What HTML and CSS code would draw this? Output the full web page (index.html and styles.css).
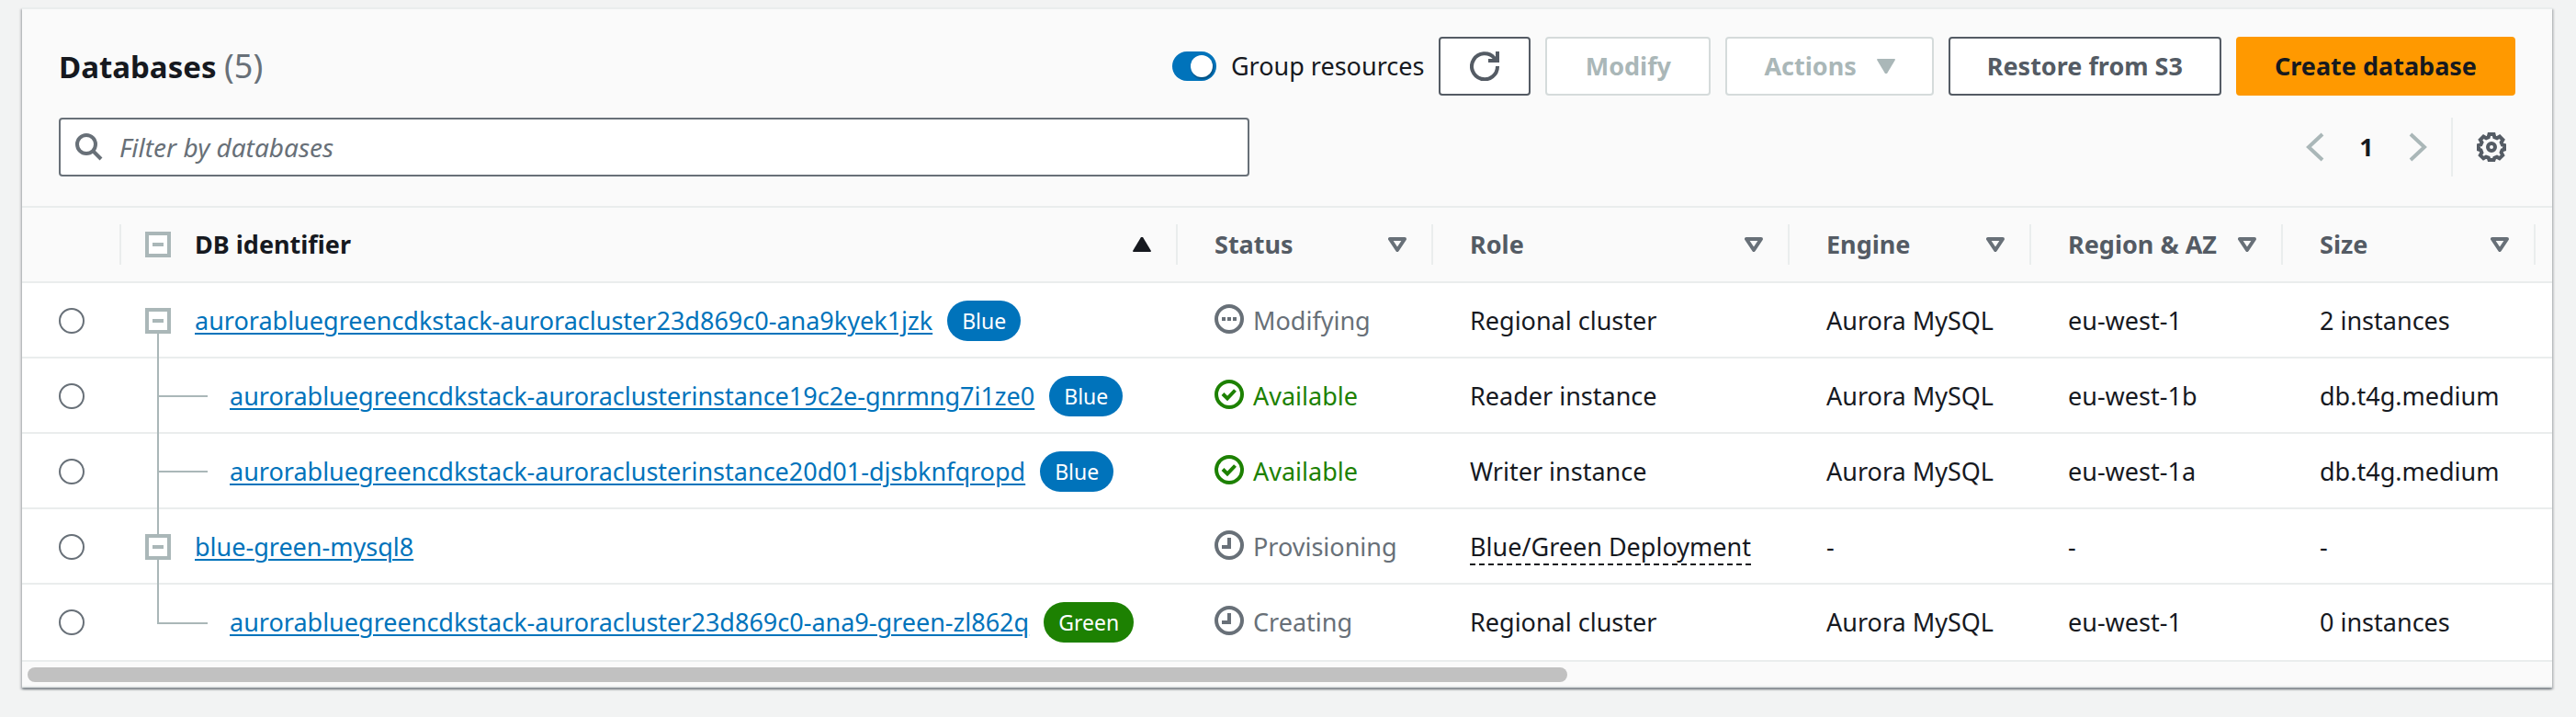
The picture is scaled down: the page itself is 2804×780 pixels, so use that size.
FILE: index.html
```
<!DOCTYPE html>
<html lang="en">
<head>
<meta charset="utf-8">
<title>Databases</title>
<link rel="stylesheet" href="styles.css">
</head>
<body>
<svg class="sprite" aria-hidden="true">
  <symbol id="i-ok" viewBox="0 0 32 32"><circle cx="16" cy="16" r="14"/><path d="M9 15.500l5 5 8.500-9"/></symbol>
  <symbol id="i-dots" viewBox="0 0 32 32"><circle cx="16" cy="16" r="14"/><path d="M8 16h4M14 16h4M20 16h4"/></symbol>
  <symbol id="i-clock" viewBox="0 0 32 32"><circle cx="16" cy="16" r="14"/><path d="M16 8v10H8"/></symbol>
  <symbol id="i-sort" viewBox="0 0 20 16"><path d="M2 2h16l-8 12z"/></symbol>
</svg>
<main class="panel">
  <header class="head">
    <div class="head-row">
      <h1 class="title">Databases <span class="count">(5)</span></h1>
      <div class="actions">
        <label class="group"><input class="toggle" type="checkbox" role="switch" checked>Group resources</label>
        <button class="btn btn-icon" type="button" aria-label="Refresh"><svg class="icon" viewBox="0 0 32 32"><path d="M30 16A14 14 0 1 1 26.500 7L29 10M30 0v10H20"/></svg></button>
        <button class="btn" type="button" disabled>Modify</button>
        <button class="btn" type="button" disabled>Actions <svg class="caret" viewBox="0 0 20 16"><path d="M1 0h18q1 0 1 1L11 16H9L0 1q0-1 1-1z"/></svg></button>
        <button class="btn" type="button">Restore from S3</button>
        <button class="btn btn-primary" type="button">Create database</button>
      </div>
    </div>
    <div class="head-row">
      <div class="search">
        <svg class="search-icon" viewBox="0 0 30 30"><circle cx="12" cy="12" r="10"/><path d="M19 19l9 9"/></svg>
        <input class="search-input" type="search" placeholder="Filter by databases" aria-label="Filter by databases">
      </div>
      <div class="tools">
        <nav class="pager" aria-label="Pages">
          <button class="plain chev" type="button" disabled aria-label="Previous page"><svg viewBox="0 0 20 32"><path d="M18 2L3 16l15 14"/></svg></button>
          <button class="plain page" type="button">1</button>
          <button class="plain chev" type="button" disabled aria-label="Next page"><svg viewBox="0 0 20 32"><path d="M2 2l15 14L2 30"/></svg></button>
        </nav>
        <button class="plain gear" type="button" aria-label="Preferences"><svg class="icon" viewBox="0 0 32 32"><path d="M13.500 2h5l.8 3.200 2.700 1.100 2.900-1.700 3.500 3.500-1.700 2.900 1.100 2.500 2.200.5v4.500l-2.400.8-1 2.600 1.600 2.900-3.500 3.500-2.800-1.600-2.600 1.100-.8 2.200h-5l-.8-2.400-2.600-1-2.800 1.700-3.500-3.500 1.600-2.800-1-2.600L2 18.500V14l2.400-.6 1.100-2.500L3.800 8l3.500-3.500 2.900 1.700 2.500-1z"/><circle cx="16" cy="16" r="4"/></svg></button>
      </div>
    </div>
  </header>
  <table class="grid">
    <colgroup><col class="c-pick"><col><col class="c-status"><col class="c-role"><col class="c-engine"><col class="c-region"><col class="c-size"><col class="c-end"></colgroup>
    <thead>
      <tr>
        <th><div class="th"></div></th>
        <th><div class="th th-id sorted"><button class="box" type="button" aria-label="Collapse all"></button><span>DB identifier</span><svg class="caret" viewBox="0 0 20 16"><path d="M9 0h2l9 15q0 1-1 1H1q-1 0-1-1z"/></svg></div></th>
        <th><div class="th">Status<svg class="sort"><use href="#i-sort"/></svg></div></th>
        <th><div class="th">Role<svg class="sort"><use href="#i-sort"/></svg></div></th>
        <th><div class="th">Engine<svg class="sort"><use href="#i-sort"/></svg></div></th>
        <th><div class="th">Region &amp; AZ<svg class="sort"><use href="#i-sort"/></svg></div></th>
        <th><div class="th">Size<svg class="sort"><use href="#i-sort"/></svg></div></th>
        <th></th>
      </tr>
    </thead>
    <tbody>
      <tr>
        <td class="pick"><input class="radio" type="radio" name="db" aria-label="aurorabluegreencdkstack-auroracluster23d869c0-ana9kyek1jzk"></td>
        <td class="id root first"><div class="name"><button class="box" type="button" aria-label="Collapse"></button><a class="link" href="#">aurorabluegreencdkstack-auroracluster23d869c0-ana9kyek1jzk</a><span class="badge">Blue</span></div></td>
        <td><div class="status"><svg class="icon"><use href="#i-dots"/></svg>Modifying</div></td>
        <td>Regional cluster</td><td>Aurora MySQL</td><td>eu-west-1</td><td>2 instances</td><td></td>
      </tr>
      <tr>
        <td class="pick"><input class="radio" type="radio" name="db" aria-label="aurorabluegreencdkstack-auroraclusterinstance19c2e-gnrmng7i1ze0"></td>
        <td class="id child"><div class="name"><a class="link" href="#">aurorabluegreencdkstack-auroraclusterinstance19c2e-gnrmng7i1ze0</a><span class="badge">Blue</span></div></td>
        <td><div class="status ok"><svg class="icon"><use href="#i-ok"/></svg>Available</div></td>
        <td>Reader instance</td><td>Aurora MySQL</td><td>eu-west-1b</td><td>db.t4g.medium</td><td></td>
      </tr>
      <tr>
        <td class="pick"><input class="radio" type="radio" name="db" aria-label="aurorabluegreencdkstack-auroraclusterinstance20d01-djsbknfqropd"></td>
        <td class="id child"><div class="name"><a class="link" href="#">aurorabluegreencdkstack-auroraclusterinstance20d01-djsbknfqropd</a><span class="badge">Blue</span></div></td>
        <td><div class="status ok"><svg class="icon"><use href="#i-ok"/></svg>Available</div></td>
        <td>Writer instance</td><td>Aurora MySQL</td><td>eu-west-1a</td><td>db.t4g.medium</td><td></td>
      </tr>
      <tr>
        <td class="pick"><input class="radio" type="radio" name="db" aria-label="blue-green-mysql8"></td>
        <td class="id root"><div class="name"><button class="box" type="button" aria-label="Collapse"></button><a class="link" href="#">blue-green-mysql8</a></div></td>
        <td><div class="status"><svg class="icon"><use href="#i-clock"/></svg>Provisioning</div></td>
        <td><span class="hint">Blue/Green Deployment</span></td><td>-</td><td>-</td><td>-</td><td></td>
      </tr>
      <tr>
        <td class="pick"><input class="radio" type="radio" name="db" aria-label="aurorabluegreencdkstack-auroracluster23d869c0-ana9-green-zl862q"></td>
        <td class="id child last"><div class="name"><a class="link" href="#">aurorabluegreencdkstack-auroracluster23d869c0-ana9-green-zl862q</a><span class="badge green">Green</span></div></td>
        <td><div class="status"><svg class="icon"><use href="#i-clock"/></svg>Creating</div></td>
        <td>Regional cluster</td><td>Aurora MySQL</td><td>eu-west-1</td><td>0 instances</td><td></td>
      </tr>
    </tbody>
  </table>
  <div class="scroll"><div class="thumb"></div></div>
</main>
</body>
</html>
```
FILE: styles.css
```
* { box-sizing: border-box; }
body {
  margin: 0;
  padding: 8px 26px 32px 24px;
  background: #f2f3f3;
  color: #16191f;
  font-family: "Noto Sans", "Open Sans", sans-serif;
  font-size: 27px;
  line-height: 44px;
}
button, input { font: inherit; color: inherit; margin: 0; }
svg { display: block; fill: none; stroke: currentColor; flex: none; }
.sprite { display: none; }
.panel {
  background: #fff;
  border-top: 2px solid #eaeded;
  box-shadow: 0 2px 2px 0 #687078aa, 2px 2px 2px 0 #00071626, -2px 2px 2px 0 #00071626;
}
.head {
  display: flex;
  flex-direction: column;
  gap: 24px;
  padding: 30px 40px 32px;
  background: #fafafa;
  border-bottom: 2px solid #eaeded;
}
.head-row { display: flex; align-items: center; justify-content: space-between; }
.title { margin: 0; font-size: 33px; font-weight: 700; }
.count { font-size: 36px; font-weight: 400; color: #687078; }
.actions { display: flex; align-items: center; gap: 16px; }
.group { display: flex; align-items: center; gap: 16px; }
.toggle {
  appearance: none;
  display: flex;
  justify-content: flex-end;
  width: 48px;
  height: 32px;
  padding: 4px;
  border-radius: 16px;
  background: #0073bb;
}
.toggle::before {
  content: "";
  width: 24px;
  height: 24px;
  border-radius: 50%;
  background: #fff;
  box-shadow: 1px 2px 2px #00000055;
}
.toggle:not(:checked) { justify-content: flex-start; background: #687078; }
.btn {
  display: flex;
  align-items: center;
  justify-content: center;
  gap: 22px;
  min-width: 180px;
  height: 64px;
  padding: 0 40px;
  border: 2px solid #545b64;
  border-radius: 4px;
  background: #fff;
  color: #545b64;
  font-weight: 700;
  white-space: nowrap;
}
.btn:disabled { border-color: #d5dbdb; color: #aab7b8; }
.btn-icon { min-width: 0; padding: 0 32px; }
.btn-primary { background: #f90; border-color: #f90; color: #16191f; }
.icon { width: 32px; height: 32px; stroke-width: 4; }
.caret { width: 20px; height: 16px; fill: currentColor; stroke: none; }
.search {
  display: flex;
  align-items: center;
  gap: 18px;
  width: 1296px;
  height: 64px;
  padding: 0 16px;
  border: 2px solid #687078;
  border-radius: 4px;
  background: #fff;
  color: #687078;
}
.search-icon { width: 30px; height: 30px; stroke-width: 4; }
.search-input { flex: 1; min-width: 0; border: 0; padding: 0; background: none; outline: 0; font-size: 28px; }
.search-input::placeholder { color: #687078; font-style: italic; opacity: 1; }
.tools { display: flex; align-items: center; }
.pager { display: flex; align-items: center; padding-right: 26px; }
.plain { border: 0; padding: 0; background: none; }
.chev { color: #aab7b8; }
.chev svg { width: 20px; height: 32px; stroke-width: 4; }
.page { width: 92px; font-weight: 700; }
.gear { padding: 16px 10px 16px 26px; border-left: 2px solid #eaeded; color: #545b64; }
.grid { width: 100%; border-collapse: separate; border-spacing: 0; table-layout: fixed; }
.c-pick { width: 108px; }
.c-status { width: 278px; }
.c-role { width: 388px; }
.c-engine { width: 263px; }
.c-region { width: 274px; }
.c-size { width: 275px; }
.c-end { width: 18px; }
th {
  height: 82px;
  padding: 0;
  background: #fafafa;
  border-bottom: 2px solid #eaeded;
  color: #545b64;
  font-weight: 700;
  text-align: left;
  white-space: nowrap;
}
.th {
  display: flex;
  align-items: center;
  justify-content: space-between;
  height: 44px;
  padding: 0 27px 0 40px;
  border-right: 2px solid #eaeded;
}
.th-id { justify-content: flex-start; gap: 26px; padding-left: 26px; color: #16191f; }
.th-id .caret { margin-left: auto; }
.sort { width: 20px; height: 16px; stroke: #687078; stroke-width: 4; stroke-linejoin: round; }
td {
  height: 82px;
  padding: 2px 0 0 40px;
  border-bottom: 2px solid #eaeded;
  white-space: nowrap;
}
tbody tr:last-child td { height: 84px; padding-bottom: 2px; }
.radio {
  appearance: none;
  display: block;
  width: 28px;
  height: 28px;
  border: 2px solid #687078;
  border-radius: 50%;
  background: #fff;
}
.radio:checked { border: 8px solid #0073bb; }
.box {
  flex: none;
  display: grid;
  place-items: center;
  width: 28px;
  height: 28px;
  padding: 0;
  border: 4px solid #aab7b8;
  background: #fff;
}
.box::before { content: ""; width: 12px; height: 4px; background: #aab7b8; }
.id { position: relative; padding-left: 26px; }
.child { padding-left: 118px; padding-left: 64px; }
.id::before {
  content: "";
  position: absolute;
  left: 39px;
  top: 0;
  bottom: -2px;
  border-left: 2px solid #aab7b8;
}
.first::before { top: 50%; }
.last::before { bottom: 50%; }
.child::after {
  content: "";
  position: absolute;
  left: 39px;
  top: 50%;
  width: 55px;
  border-top: 2px solid #aab7b8;
}
.child { padding-left: 118px; }
.name { position: relative; display: flex; align-items: center; }
.name .box { margin-right: 26px; }
.link {
  color: #0073bb;
  text-decoration: underline;
  text-decoration-thickness: 2px;
  text-underline-offset: 3px;
}
.badge {
  margin-left: 16px;
  padding: 0 16px;
  border-radius: 22px;
  background: #0073bb;
  color: #fff;
  font-size: 23px;
}
.green { background: #1d8102; }
.status { display: flex; align-items: center; gap: 10px; color: #687078; }
.status .icon { margin-bottom: 4px; }
.ok { color: #1d8102; }
.hint { border-bottom: 2px dashed #16191f; }
.scroll { padding: 6px 6px 4px; background: #fafafa; border-bottom: 2px solid #eaeded; }
.thumb { width: 1676px; max-width: 100%; height: 16px; border-radius: 8px; background: #c1c1c1; }
```
